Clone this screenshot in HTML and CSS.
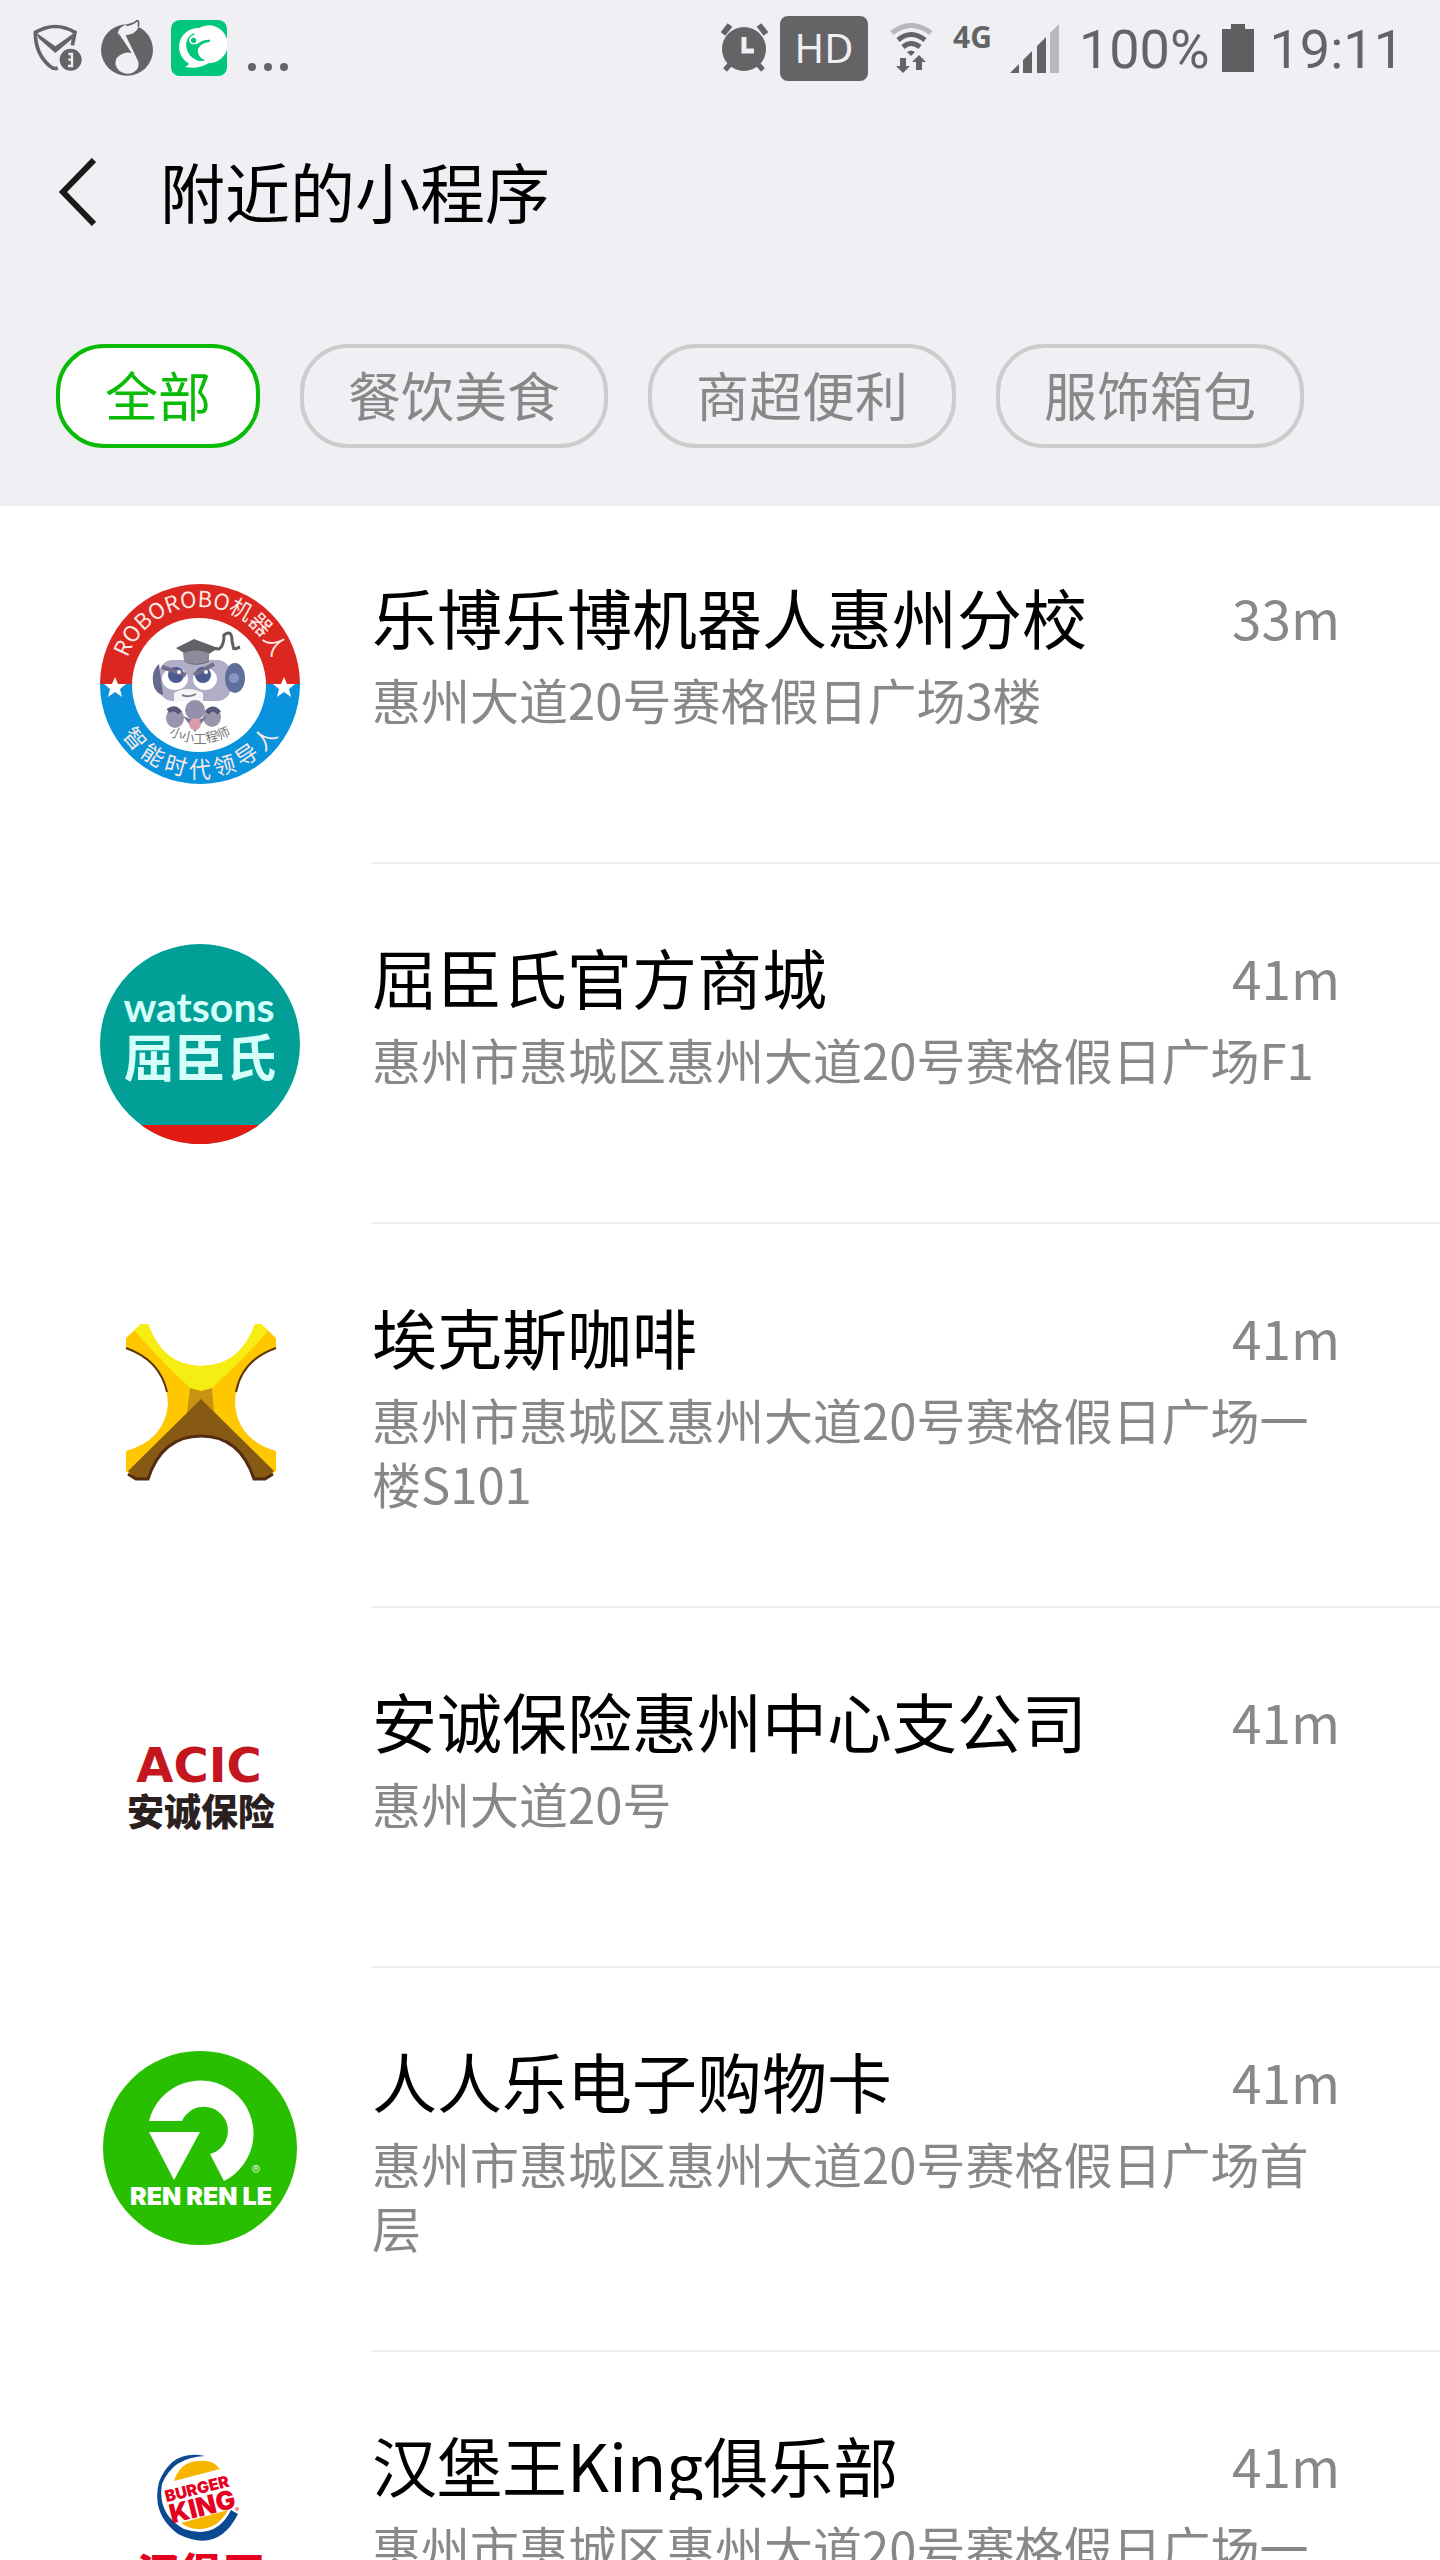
FILE: index.html
```html
<!DOCTYPE html>
<html lang="zh-CN">
    <head>
        <meta charset="UTF-8">
        <meta name="viewport" content="width=device-width, initial-scale=1">
        <title>附近的小程序</title>
        <link rel="stylesheet" href="styles.css">
    </head>
    <body>
        <div class="header">
            <div class="statusBar">
                <div class="notifications">
                    <svg class="shieldIcon" width="50" height="48" viewBox="0 0 150 144">
                        <path d="M118 64 L126 25 Q67 -10 7 25 Q7 90 50 126 Q62 137 74 132" fill="none" stroke="#646467" stroke-width="11"/>
                        <path d="M10 26 L67 67 L124 26 L118 44 L67 87 L18 44z" fill="#646467"/>
                        <circle cx="113" cy="107" r="33" fill="#646467"/>
                        <path d="M106 90 h11 v36 h-12 M116 107 h-10" fill="none" stroke="#efeff4" stroke-width="7"/>
                    </svg>
                    <svg class="musicIcon" width="52" height="56" viewBox="0 0 156 168">
                        <ellipse cx="78" cy="90" rx="78" ry="77" fill="#646467"/>
                        <path d="M50 39 Q54 20 80 12 Q100 8 106 0 Q114 -1 114 10 L112 22 Q106 42 74 46 L108 116 Q117 132 109 146 Q98 162 76 161 Q49 157 43 132 Q42 110 65 101 Q80 95 92 99 L57 46z" fill="#efeff4"/>
                        <path d="M76 16 Q101 10 107 2 Q112 0 113 8 L112 20" fill="none" stroke="#646467" stroke-width="5"/>
                    </svg>
                    <svg class="appIcon" width="56" height="56" viewBox="0 0 168 168">
                        <rect width="168" height="168" rx="26" fill="#00c77b"/>
                        <path d="M84 24 A57 57 0 1 1 112 130 Q78 150 41 140 Q50 138 54 131 A57 57 0 0 1 84 24z" fill="#fff"/>
                        <path d="M67 40 Q42 54 46 82 Q52 112 80 122 Q93 125 103 121 Q82 113 80 93 Q82 70 117 65 V59 Q96 58 78 72 Q59 76 54 62 Q54 50 72 42z" fill="#00c77b"/>
                        <circle cx="68" cy="61" r="10" fill="#00c77b" stroke="#fff" stroke-width="4"/>
                    </svg>
                    <svg class="moreIcon" width="40" height="56" viewBox="0 0 40 56">
                        <g fill="#646467"><circle cx="4" cy="47" r="4"/><circle cx="20" cy="47" r="4"/><circle cx="36" cy="47" r="4"/></g>
                    </svg>
                </div>
                <div class="system">
                    <svg class="alarmIcon" width="47" height="50" viewBox="0 0 47 50">
                        <ellipse cx="23" cy="26" rx="22" ry="22" fill="#646467"/>
                        <path d="M2 11 L9 2 M38 2 L45 11" stroke="#646467" stroke-width="6"/>
                        <path d="M10 40 L4 47 M36 40 L42 47" stroke="#646467" stroke-width="5"/>
                        <path d="M23 14 V28 H33" fill="none" stroke="#efeff4" stroke-width="5"/>
                    </svg>
                    <span class="hd">HD</span>
                    <svg class="wifiIcon" width="43" height="50" viewBox="0 0 43 50">
                        <g fill="none" stroke="#646467" stroke-width="5">
                            <path d="M2 10 Q21 -5 41 10" stroke="#b7b7bc"/>
                            <path d="M8 17 Q21 6 35 17"/>
                            <path d="M13 24 Q21 17 30 24"/>
                        </g>
                        <path d="M17 29 Q21 26 25 29 L21 33z" fill="#646467"/>
                        <path d="M10 35 h6 v8 h4 L13 50 L6 43 h4z M26 47 h6 v-8 h4 L29 32 L22 39 h4z" fill="#646467"/>
                    </svg>
                    <span class="network">4G</span>
                    <svg class="signalIcon" width="49" height="49" viewBox="0 0 49 49">
                        <path d="M0 49 L9 40 V49z M13 36 L22 27 V49 H13z M27 22 L36 13 V49 H27z" fill="#646467"/>
                        <path d="M40 9 L49 0 V49 H40z" fill="#b7b7bc"/>
                    </svg>
                    <span class="percent">100%</span>
                    <svg class="batteryIcon" width="32" height="48" viewBox="0 0 32 48">
                        <path d="M9 0 H23 V5 H32 V48 H0 V5 H9z" fill="#5f5f61"/>
                    </svg>
                    <span class="clock">19:11</span>
                </div>
            </div>

            <div class="navBar">
                <button type="button" class="backBtn" aria-label="返回">
                    <svg width="38" height="68" viewBox="0 0 38 68">
                        <path d="M36 2 L5 34 L36 66" fill="none" stroke="#1a1a1a" stroke-width="6"/>
                    </svg>
                </button>
                <h1>附近的小程序</h1>
            </div>

            <div class="filters">
                <button type="button" class="chip active">全部</button>
                <button type="button" class="chip">餐饮美食</button>
                <button type="button" class="chip">商超便利</button>
                <button type="button" class="chip">服饰箱包</button>
            </div>
        </div>

        <div class="list">
            <a href="#" class="item">
                <svg class="logo" viewBox="0 0 200 200">
                    <defs>
                        <path id="arcTop" d="M23 100 A77 77 0 0 1 177 100"/>
                        <path id="arcBottom" d="M7 100 A93 93 0 0 0 193 100"/>
                        <path id="arcInner" d="M38 107 A63 63 0 0 0 162 107"/>
                    </defs>
                    <path d="M0 100 A100 100 0 0 1 200 100z" fill="#dc2720"/>
                    <path d="M0 100 A100 100 0 0 0 200 100z" fill="#0a93dd"/>
                    <circle cx="99" cy="101" r="67" fill="#fff"/>
                    <g class="ringText">
                        <text><textPath href="#arcTop" startOffset="50%">ROBOROBO机器人</textPath></text>
                        <text><textPath href="#arcBottom" startOffset="50%">智 能 时 代 领 导 人</textPath></text>
                    </g>
                    <text class="motto"><textPath href="#arcInner" startOffset="50%">小小工程师</textPath></text>
                    <path id="star" d="M15 93 L18 100 L26 100 L20 105 L22 113 L15 108 L8 113 L10 105 L4 100 L12 100z" fill="#fff"/>
                    <use href="#star" x="169"/>
                    <!-- robot head -->
                    <rect x="59" y="76" width="72" height="41" rx="14" fill="#b1adc6"/>
                    <path d="M59 80 Q50 88 54 103 Q57 110 63 111z" fill="#66688c"/>
                    <ellipse cx="135" cy="94" rx="10" ry="15" fill="#5f6f9c"/>
                    <circle cx="134" cy="94" r="5" fill="#8495c1"/>
                    <ellipse cx="75" cy="95" rx="13" ry="11" fill="#fff"/>
                    <ellipse cx="105" cy="95" rx="12" ry="11" fill="#fff"/>
                    <circle cx="76" cy="91" r="8" fill="#4c5a8e"/>
                    <circle cx="103" cy="91" r="8" fill="#4c5a8e"/>
                    <path d="M62 83 L86 91 M94 91 L114 80" stroke="#706d8e" stroke-width="4"/>
                    <circle cx="79" cy="88" r="2" fill="#fff"/>
                    <circle cx="106" cy="88" r="2" fill="#fff"/>
                    <path d="M74 117 V109 Q88 101 103 109 V117z" fill="#f5f4f8"/>
                    <path d="M82 111 Q89 114 96 110" fill="none" stroke="#8b7b8d" stroke-width="2"/>
                    <path d="M76 64 L94 55 L118 64 L109 70 V78 Q94 84 84 77 V69z" fill="#646269"/>
                    <path d="M83 69 Q96 64 109 69 V77 Q95 83 84 77z" fill="#8e8b9d"/>
                    <path d="M105 64 L119 65 Q124 62 124 51 Q132 45 132 57 L134 66 M135 65 L140 63" fill="none" stroke="#605d62" stroke-width="3"/>
                    <!-- robot body -->
                    <circle cx="95" cy="126" r="10" fill="#9391a9"/>
                    <ellipse cx="75" cy="134" rx="9" ry="10" fill="#9796ac"/>
                    <ellipse cx="112" cy="133" rx="9" ry="10" fill="#9796ac"/>
                    <path d="M68 127 Q75 122 80 129 M107 129 Q113 121 119 129" fill="none" stroke="#575978" stroke-width="5"/>
                    <path d="M83 132 L95 148 L107 132 L96 137z" fill="#77758f"/>
                    <circle cx="95" cy="140" r="6" fill="#d99cab"/>
                </svg>
                <div class="text">
                    <div class="titleRow">
                        <h2>乐博乐博机器人惠州分校</h2>
                        <span class="distance">33m</span>
                    </div>
                    <p>惠州大道20号赛格假日广场3楼</p>
                </div>
            </a>

            <a href="#" class="item">
                <svg class="logo" viewBox="0 0 200 200">
                    <circle cx="100" cy="100" r="100" fill="#029f96"/>
                    <path d="M41 181 H159 A100 100 0 0 1 41 181z" fill="#e41b13"/>
                    <text class="watsons" x="99" y="78">watsons</text>
                    <text class="watsonsCn" x="100" y="133">屈臣氏</text>
                </svg>
                <div class="text">
                    <div class="titleRow">
                        <h2>屈臣氏官方商城</h2>
                        <span class="distance">41m</span>
                    </div>
                    <p>惠州市惠城区惠州大道20号赛格假日广场F1</p>
                </div>
            </a>

            <a href="#" class="item">
                <svg class="logo" viewBox="0 0 200 200">
                    <path d="M26 34 L41 20 H48 Q63 62 101 62 Q140 62 155 20 H161 L176 34 V45 Q135 60 135 100 Q138 136 176 147 V167 L165 175 H154 Q140 132 101 132 Q62 132 48 175 H36 L26 167 V147 Q65 136 68 100 Q67 60 26 45z" fill="#ffc700"/>
                    <path d="M34 26 L41 20 H48 Q63 62 101 62 Q140 62 155 20 H161 L168 27 Q146 52 112 84 L101 95 L90 84 Q56 52 34 26z" fill="#f6ed12"/>
                    <path d="M101 95 L174 167 L165 175 H154 Q140 132 101 132 Q62 132 48 175 H36 L28 167z" fill="#875a13"/>
                    <path d="M90 84 L101 87 L112 84 L114 109 L101 95 L87 109z" fill="#c89413"/>
                    <path d="M101 95 L115 109 H87z" fill="#875a13"/>
                    <path d="M26 44 Q60 56 67 88 M176 44 Q142 56 136 88" fill="none" stroke="#5b3510" stroke-width="2"/>
                    <path d="M28 170 L36 175 H48 Q62 132 101 132 Q140 132 154 175 H165 L173 170" fill="none" stroke="#552a13" stroke-width="3"/>
                </svg>
                <div class="text">
                    <div class="titleRow">
                        <h2>埃克斯咖啡</h2>
                        <span class="distance">41m</span>
                    </div>
                    <p>惠州市惠城区惠州大道20号赛格假日广场一楼S101</p>
                </div>
            </a>

            <a href="#" class="item">
                <svg class="logo" viewBox="0 0 200 200">
                    <text class="acic" x="99" y="94">ACIC</text>
                    <text class="acicCn" x="101" y="138">安诚保险</text>
                </svg>
                <div class="text">
                    <div class="titleRow">
                        <h2>安诚保险惠州中心支公司</h2>
                        <span class="distance">41m</span>
                    </div>
                    <p>惠州大道20号</p>
                </div>
            </a>

            <a href="#" class="item">
                <svg class="logo" viewBox="0 0 200 200">
                    <circle cx="100" cy="100" r="97" fill="#28bf00"/>
                    <path d="M49 73 A53 53 0 1 1 124 133 L110 106 A24 24 0 1 0 82 73z M49 84 H100 L74 132z" fill="#fff"/>
                    <text class="renrenle" x="101" y="157">REN REN LE</text>
                    <text class="registered" x="156" y="131">®</text>
                </svg>
                <div class="text">
                    <div class="titleRow">
                        <h2>人人乐电子购物卡</h2>
                        <span class="distance">41m</span>
                    </div>
                    <p>惠州市惠城区惠州大道20号赛格假日广场首层</p>
                </div>
            </a>

            <a href="#" class="item">
                <svg class="logo" viewBox="0 0 200 200">
                    <path d="M105 24 Q72 17 59 50 Q51 82 78 102 Q118 122 138 82 L131 78 Q116 108 84 97 Q57 82 62 52 Q73 25 105 24z" fill="#0b4a91"/>
                    <path d="M74 49 Q80 30 98 29 Q113 27 120 37 L74 49z M81 91 L128 78 Q118 97 99 97 Q89 97 81 91z" fill="#f8b500"/>
                    <g class="burger" transform="rotate(-14 100 65)">
                        <text x="99" y="62">BURGER</text>
                        <text class="king" x="100" y="84">KING</text>
                    </g>
                    <circle cx="137" cy="77" r="2" fill="#f08a92"/>
                    <text class="burgerCn" x="101" y="158">汉堡王</text>
                </svg>
                <div class="text">
                    <div class="titleRow">
                        <h2>汉堡王King俱乐部</h2>
                        <span class="distance">41m</span>
                    </div>
                    <p>惠州市惠城区惠州大道20号赛格假日广场一楼</p>
                </div>
            </a>
        </div>
    </body>
</html>
```
FILE: styles.css
```css
html, body {
    margin: 0px;
    padding: 0px;
    height: 100%;
}

body {
    display: flex;
    flex-direction: column;
    overflow: hidden;
    background-color: #fff;
    color: #000;
    font-family: "Noto Sans CJK SC", sans-serif;
}

h1, h2, p {
    margin: 0px;
    font-weight: normal;
}

svg {
    display: block;
    flex: none;
}

button {
    margin: 0px;
    font-family: inherit;
    cursor: pointer;
}

.header {
    flex: none;
    padding-bottom: 58px;
    background-color: #efeff4;
}

/* status bar */

.statusBar {
    display: flex;
    justify-content: space-between;
    height: 96px;
    padding: 0px 36px 0px 33px;
    box-sizing: border-box;
    color: #646467;
    font-family: Roboto, sans-serif;
}

.notifications, .system {
    display: flex;
    align-items: center;
    height: 96px;
}

.notifications {
    gap: 18px;
}

.moreIcon {
    margin-left: 3px;
}

.system {
    gap: 20px;
}

.hd {
    width: 88px;
    height: 65px;
    margin-left: -8px;
    margin-right: 2px;
    border-radius: 8px;
    background-color: #646467;
    color: #efeff4;
    font-family: "Noto Sans", sans-serif;
    font-size: 40px;
    line-height: 64px;
    text-align: center;
}

.network {
    margin-right: -2px;
    padding-bottom: 22px;
    font-family: "Noto Sans", sans-serif;
    font-size: 30px;
    font-weight: bold;
    line-height: 30px;
}

.percent, .clock {
    padding-top: 4px;
    font-size: 54px;
    line-height: 64px;
}

.percent {
    margin-right: -8px;
}

.batteryIcon {
    margin-right: -4px;
}

/* title bar */

.navBar {
    display: flex;
    align-items: center;
    height: 188px;
    padding-left: 58px;
}

.backBtn {
    padding: 4px 0px 0px 0px;
    border: none;
    background: none;
}

.navBar h1 {
    margin-left: 64px;
    font-size: 65px;
    line-height: 72px;
}

.filters {
    display: flex;
    gap: 40px;
    padding: 60px 56px 0px 56px;
}

.chip {
    box-sizing: border-box;
    min-width: 204px;
    height: 104px;
    padding: 0px 44px 4px 44px;
    border: 4px solid #ccc;
    border-radius: 48px;
    background-color: transparent;
    color: #888;
    font-size: 53px;
    line-height: 92px;
    white-space: nowrap;
}

.chip.active {
    border-color: #09bb07;
    background-color: #fff;
    color: #09bb07;
}

/* shop list */

.list {
    flex: 1;
    min-height: 0px;
    overflow: hidden;
}

.item {
    display: flex;
    padding-left: 100px;
    color: inherit;
    text-decoration: none;
}

.item:first-child {
    margin-top: -2px;
}

.item:active {
    background-color: #ececec;
}

.logo {
    width: 200px;
    height: 200px;
    margin: 80px 72px 0px 0px;
}

.text {
    flex: 1;
    min-width: 0px;
    min-height: 360px;
    padding: 80px 100px 91px 0px;
    box-sizing: border-box;
    border-bottom: 2px solid #ececec;
}

.titleRow {
    display: flex;
    justify-content: space-between;
    gap: 40px;
}

.text h2 {
    padding-bottom: 4px;
    overflow: hidden;
    font-size: 65px;
    line-height: 64px;
    white-space: nowrap;
}

.distance {
    color: #888;
    font-size: 53px;
    line-height: 66px;
}

.text p {
    margin-top: 15px;
    color: #888;
    font-size: 49px;
    line-height: 64px;
}

/* lettering inside the logos */

.logo text {
    text-anchor: middle;
}

.ringText {
    fill: #fbe9e4;
    font-size: 22px;
}

.motto {
    fill: #777;
    font-size: 13px;
}

.watsons {
    fill: #d5fffb;
    font-family: Lato, sans-serif;
    font-size: 41px;
    font-weight: bold;
}

.watsonsCn {
    fill: #d5fffb;
    font-size: 51px;
    font-weight: bold;
}

.acic {
    fill: #c3161f;
    font-family: "DejaVu Sans", sans-serif;
    font-size: 48px;
    font-weight: bold;
}

.acicCn {
    fill: #2b2020;
    font-size: 37px;
    font-weight: 900;
}

.renrenle {
    fill: #fff;
    font-family: Inter, sans-serif;
    font-size: 25px;
    font-weight: 900;
}

.registered {
    fill: #d4f2cc;
    font-size: 18px;
}

.burger {
    fill: #e60020;
    font-family: Inter, sans-serif;
    font-size: 16px;
    font-weight: 900;
}

.king {
    font-size: 26px;
}

.burgerCn {
    fill: #e60020;
    font-size: 43px;
    font-weight: 900;
}
```
